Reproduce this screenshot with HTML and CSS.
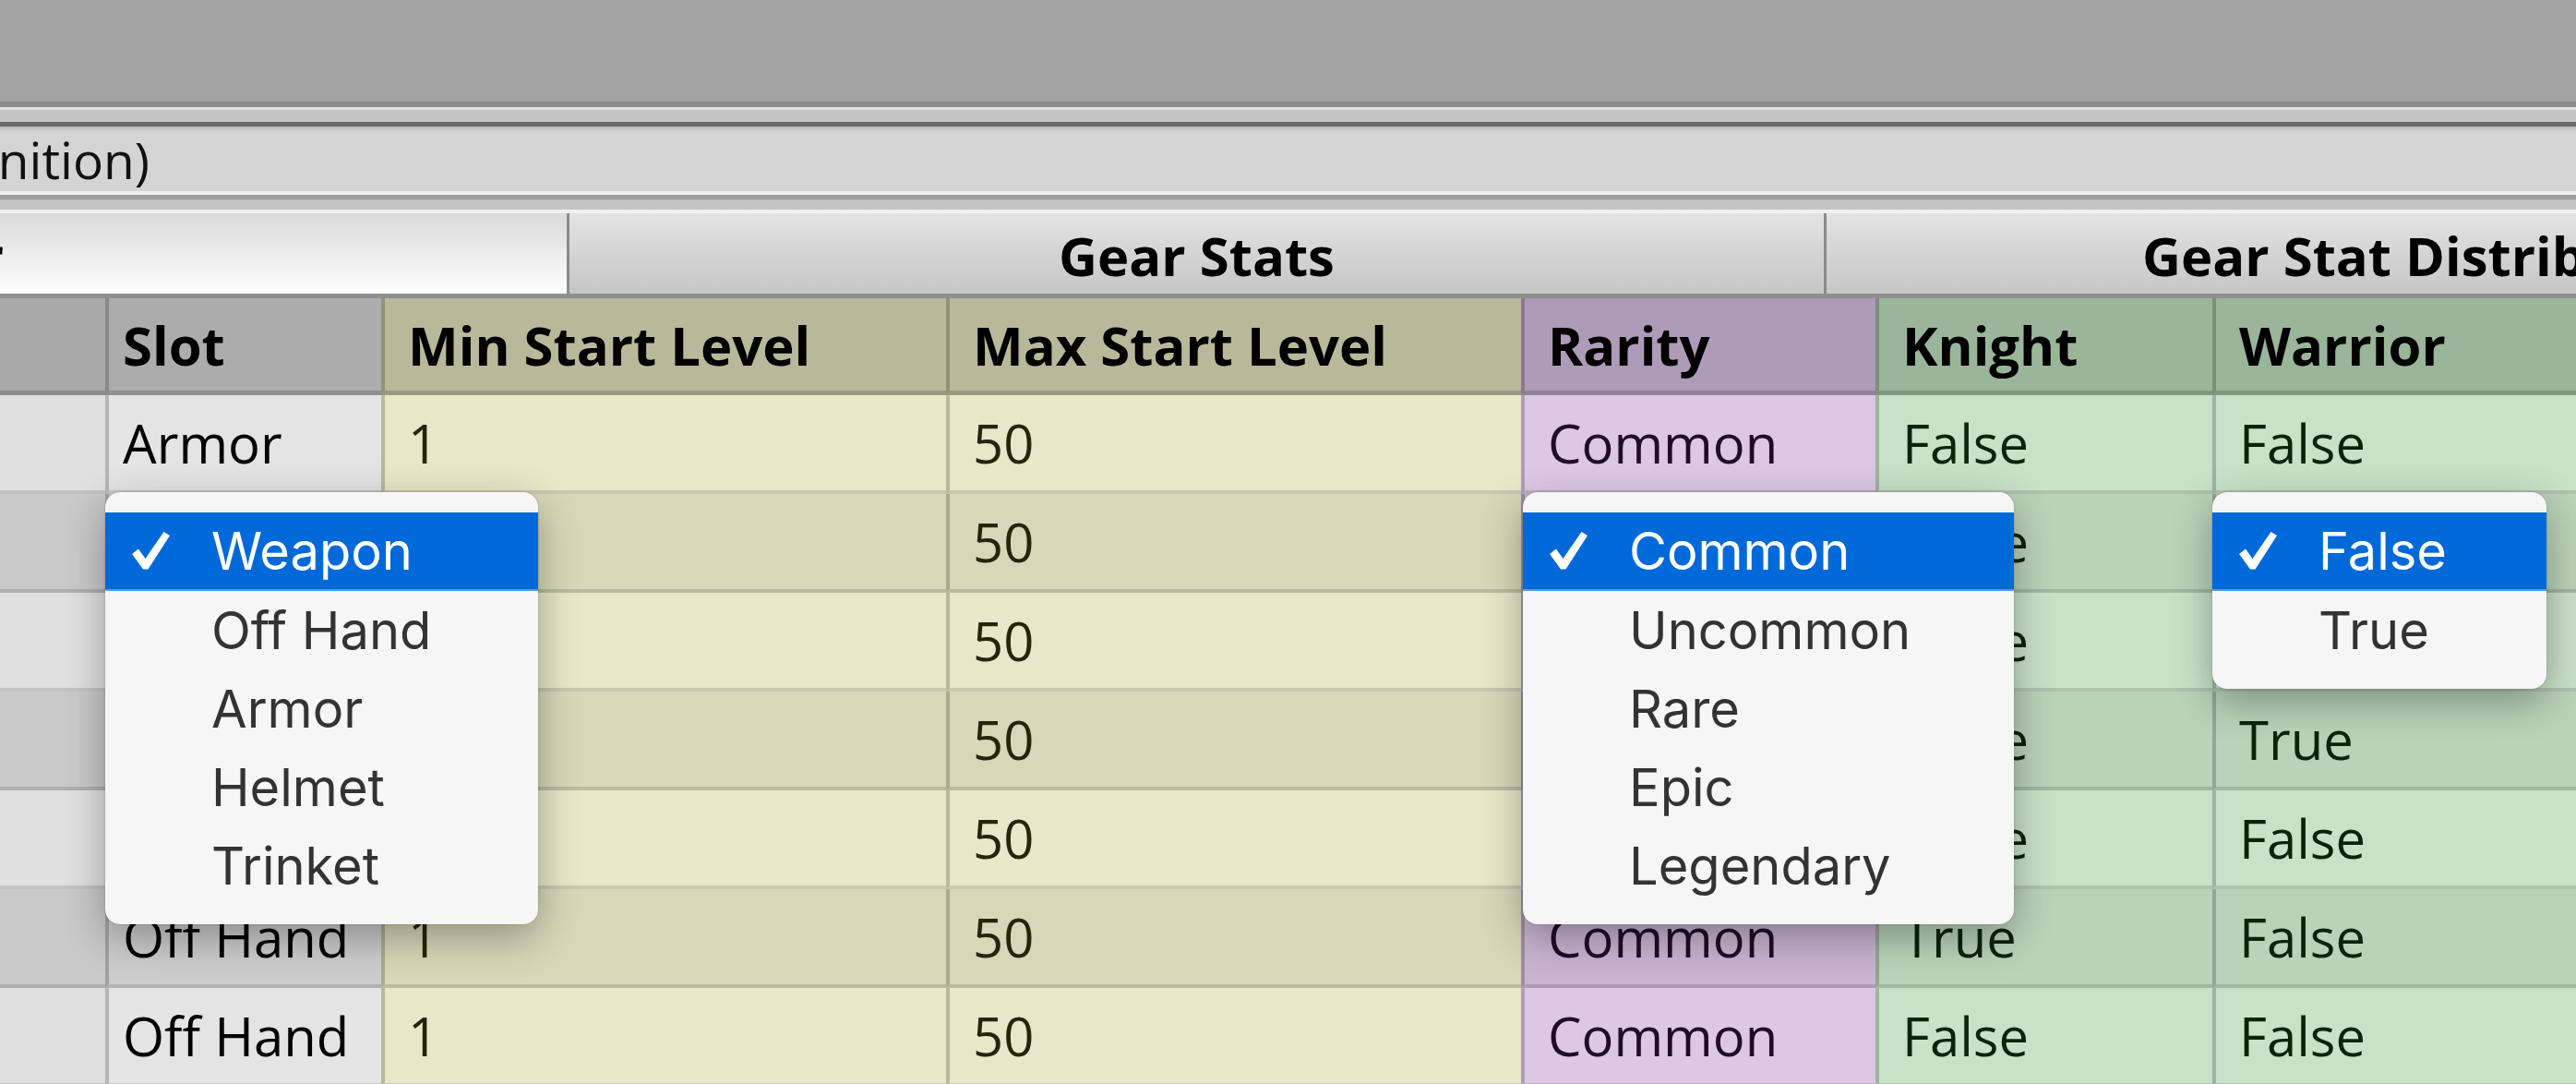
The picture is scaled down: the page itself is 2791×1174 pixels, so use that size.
FILE: index.html
```html
<!DOCTYPE html>
<html>
<head>
<meta charset="utf-8">
<title>Gear Definition</title>
<link rel="stylesheet" href="styles.css">
</head>
<body>
  <div class="topbar"></div>
  <div class="rail"></div>
  <div class="title"><div class="clip-left title-clip">(Gear Definition)</div></div>
  <div class="rail2"></div>

  <div class="groups">
    <div class="g g-name"><div class="clip-left name-clip">Gear</div></div>
    <div class="g g-stats">Gear Stats</div>
    <div class="g g-dist">Gear Stat Distribution</div>
  </div>

  <div class="table">
    <div class="row head">
      <div class="c idx"></div>
      <div class="c slot">Slot</div>
      <div class="c yel">Min Start Level</div>
      <div class="c yel">Max Start Level</div>
      <div class="c pur">Rarity</div>
      <div class="c grn">Knight</div>
      <div class="c grn">Warrior</div>
    </div>
    <div class="row">
      <div class="c idx"></div>
      <div class="c slot">Armor</div>
      <div class="c yel">1</div>
      <div class="c yel">50</div>
      <div class="c pur">Common</div>
      <div class="c grn">False</div>
      <div class="c grn">False</div>
    </div>
    <div class="row alt">
      <div class="c idx"></div>
      <div class="c slot"></div>
      <div class="c yel"></div>
      <div class="c yel">50</div>
      <div class="c pur"></div>
      <div class="c grn">False</div>
      <div class="c grn"></div>
    </div>
    <div class="row">
      <div class="c idx"></div>
      <div class="c slot"></div>
      <div class="c yel"></div>
      <div class="c yel">50</div>
      <div class="c pur"></div>
      <div class="c grn">False</div>
      <div class="c grn"></div>
    </div>
    <div class="row alt">
      <div class="c idx"></div>
      <div class="c slot"></div>
      <div class="c yel"></div>
      <div class="c yel">50</div>
      <div class="c pur"></div>
      <div class="c grn">False</div>
      <div class="c grn">True</div>
    </div>
    <div class="row">
      <div class="c idx"></div>
      <div class="c slot"></div>
      <div class="c yel"></div>
      <div class="c yel">50</div>
      <div class="c pur"></div>
      <div class="c grn">False</div>
      <div class="c grn">False</div>
    </div>
    <div class="row alt">
      <div class="c idx"></div>
      <div class="c slot">Off Hand</div>
      <div class="c yel">1</div>
      <div class="c yel">50</div>
      <div class="c pur">Common</div>
      <div class="c grn">True</div>
      <div class="c grn">False</div>
    </div>
    <div class="row">
      <div class="c idx"></div>
      <div class="c slot">Off Hand</div>
      <div class="c yel">1</div>
      <div class="c yel">50</div>
      <div class="c pur">Common</div>
      <div class="c grn">False</div>
      <div class="c grn">False</div>
    </div>
  </div>

  <div class="menu menu-slot">
    <div class="item sel"><span class="mark"><svg viewBox="0 0 41 41" width="41" height="41"><path d="M0 24 L7 18.5 L14.5 29 L34.5 0 L41 4 L17.5 40.5 L12 40.5 Z" fill="#fff"/></svg></span>Weapon</div>
    <div class="item"><span class="mark"></span>Off Hand</div>
    <div class="item"><span class="mark"></span>Armor</div>
    <div class="item"><span class="mark"></span>Helmet</div>
    <div class="item"><span class="mark"></span>Trinket</div>
  </div>

  <div class="menu menu-rarity">
    <div class="item sel"><span class="mark"><svg viewBox="0 0 41 41" width="41" height="41"><path d="M0 24 L7 18.5 L14.5 29 L34.5 0 L41 4 L17.5 40.5 L12 40.5 Z" fill="#fff"/></svg></span>Common</div>
    <div class="item"><span class="mark"></span>Uncommon</div>
    <div class="item"><span class="mark"></span>Rare</div>
    <div class="item"><span class="mark"></span>Epic</div>
    <div class="item"><span class="mark"></span>Legendary</div>
  </div>

  <div class="menu menu-bool">
    <div class="item sel"><span class="mark"><svg viewBox="0 0 41 41" width="41" height="41"><path d="M0 24 L7 18.5 L14.5 29 L34.5 0 L41 4 L17.5 40.5 L12 40.5 Z" fill="#fff"/></svg></span>False</div>
    <div class="item"><span class="mark"></span>True</div>
  </div>
</body>
</html>
```

FILE: styles.css
```css
* { box-sizing: border-box; }

html, body { margin: 0; padding: 0; }

body {
  width: 2791px;
  height: 1174px;
  overflow: hidden;
  position: relative;
  background: #a3a3a3;
  font-family: "Open Sans", "DejaVu Sans", sans-serif;
  font-size: 58px;
  color: #000;
}

/* ---------- window chrome ---------- */
.topbar {
  height: 116px;
  background: #a3a3a3;
  border-bottom: 6px solid #8b8b8b;
}

.rail {
  height: 21px;
  background: linear-gradient(#e2e2e2 0 3px, #c5c5c5 3px 16px, #6b6b6b 16px);
}

.title {
  height: 70px;
  display: flex;
  align-items: center;
  font-size: 55px;
  color: #111;
  background: linear-gradient(#b6b6b6, #d4d4d4 6px, #d4d4d4);
}

.rail2 {
  height: 24px;
  background: linear-gradient(#efefef 0 4px, #9d9d9d 4px 9px, #c4c4c4 9px 20px, #f0f0f0 20px);
}

.clip-left {
  display: flex;
  justify-content: flex-end;
  white-space: nowrap;
  flex: none;
}

.title-clip { width: 162px; }
.name-clip { width: 4px; }

/* ---------- group header ---------- */
.groups {
  height: 92px;
  display: flex;
  border-bottom: 5px solid #8f8f8f;
  font-weight: 700;
}

.g {
  height: 100%;
  display: flex;
  align-items: center;
  flex: none;
  padding-top: 4px;
  white-space: nowrap;
  overflow: hidden;
}

.g-name {
  width: 614px;
  background: linear-gradient(#dadada, #fefefe);
}

.g-stats {
  width: 1362px;
  justify-content: center;
  background: linear-gradient(#e3e3e3, #c6c6c6);
  border-left: 3px solid #8a8a8a;
}

.g-dist {
  flex: 1;
  padding-left: 342px;
  background: linear-gradient(#e3e3e3, #c6c6c6);
  border-left: 3px solid #8a8a8a;
}

/* ---------- table ---------- */
.row {
  display: grid;
  grid-template-columns: 114px 299px 612px 623px 384px 365px 394px;
  height: 107px;
}

.row.head {
  height: 105px;
  font-weight: 700;
}

.c {
  display: flex;
  align-items: center;
  padding-left: 25px;
  border-bottom: 4px solid rgba(0, 0, 0, 0.13);
  border-left: 4px solid rgba(0, 0, 0, 0.2);
  white-space: nowrap;
  overflow: hidden;
}

.c.idx { border-left: 0; padding-left: 0; background: #e0e0e0; }
.c.slot { padding-left: 15px; background: #e4e4e4; color: #000; }
.c.yel { background: #e7e7c9; color: #25250b; }
.c.pur { background: #dcc8e4; color: #1f0d27; }
.c.grn { background: #c9e1c9; color: #0b230b; }

.alt .c.idx { background: #c9c9c9; }
.alt .c.slot { background: #cccccc; }
.alt .c.yel { background: #d7d7b9; }
.alt .c.pur { background: #c8b4d0; }
.alt .c.grn { background: #bad2ba; }

.head .c { color: #000; border-bottom-width: 5px; border-bottom-color: rgba(0, 0, 0, 0.16); }
.head .c.idx { background: #a9a9a9; }
.head .c.slot { background: #acacac; }
.head .c.yel { background: #b8b89b; }
.head .c.pur { background: #ad9bb8; }
.head .c.grn { background: #9bb59b; }

/* ---------- popup menus ---------- */
.menu {
  position: absolute;
  top: 533px;
  padding: 22px 0 21px;
  background: #f6f6f6;
  border-radius: 16px;
  box-shadow: 0 14px 44px rgba(0, 0, 0, 0.32), 0 0 2px rgba(0, 0, 0, 0.25);
  font-family: "Inter", "Liberation Sans", sans-serif;
  font-size: 56px;
  color: #333;
  z-index: 2;
}

.menu-slot { left: 114px; width: 469px; }
.menu-rarity { left: 1650px; width: 532px; }
.menu-bool { left: 2397px; width: 362px; }

.item {
  height: 85px;
  display: flex;
  align-items: center;
  padding-left: 29px;
  white-space: nowrap;
}

.item.sel {
  background: #0069d9;
  color: #fff;
  border-bottom: 2px solid #4f98ec;
}

.mark {
  width: 41px;
  height: 41px;
  margin-right: 45px;
  flex: none;
  display: flex;
}
```
